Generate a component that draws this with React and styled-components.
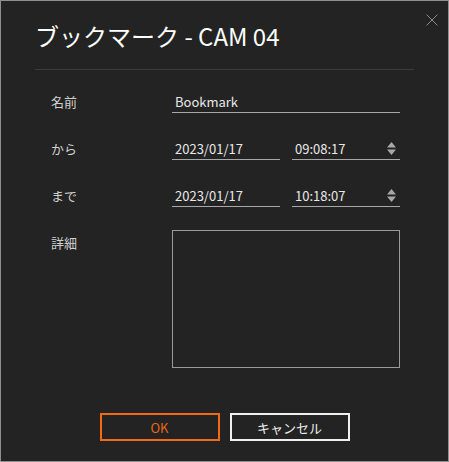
import React from "react"
import styled, { createGlobalStyle } from "styled-components"

const GlobalStyle = createGlobalStyle`
  html, body {
    margin: 0;
    padding: 0;
    background: #232323;
  }
  * {
    box-sizing: border-box;
  }
`

const App = () => {
  return (
    <>
      <GlobalStyle />
      <Dialog>
        <CloseButton aria-label="close">
          <svg width="12" height="12" viewBox="0 0 12 12">
            <path d="M0.5 0.5 L11.5 11.5 M11.5 0.5 L0.5 11.5" stroke="#8a8a8a" strokeWidth="1" />
          </svg>
        </CloseButton>
        <Header>
          <Title>ブックマーク - CAM 04</Title>
        </Header>
        <Form>
          <Label>名前</Label>
          <Field>Bookmark</Field>

          <Label>から</Label>
          <Pair>
            <Field>2023/01/17</Field>
            <Field>
              09:08:17
              <Spinner />
            </Field>
          </Pair>

          <Label>まで</Label>
          <Pair>
            <Field>2023/01/17</Field>
            <Field>
              10:18:07
              <Spinner />
            </Field>
          </Pair>

          <Label top>詳細</Label>
          <TextArea />
        </Form>
        <Actions>
          <Button primary>OK</Button>
          <Button>キャンセル</Button>
        </Actions>
      </Dialog>
    </>
  )
}

const Spinner = () => (
  <SpinIcon width="9" height="13" viewBox="0 0 9 13">
    <path d="M4.5 0 L9 5.5 L0 5.5 Z" fill="#a8a8a8" />
    <path d="M0 7.5 L9 7.5 L4.5 13 Z" fill="#a8a8a8" />
  </SpinIcon>
)

export default App

const Dialog = styled.div`
  position: relative;
  width: 449px;
  height: 462px;
  background: #232323;
  border: 1px solid #8f8f8f;
  display: flex;
  flex-direction: column;
  font-family: "Noto Sans CJK JP", "Noto Sans", sans-serif;
  color: #e6e6e6;
`

const CloseButton = styled.button`
  position: absolute;
  top: 13px;
  right: 10px;
  width: 12px;
  height: 12px;
  padding: 0;
  border: none;
  background: transparent;
  display: flex;
  cursor: pointer;
`

const Header = styled.div`
  margin: 0 34px;
  padding: 18px 0 16px 0;
  border-bottom: 1px solid #3c3c3c;
`

const Title = styled.h1`
  margin: 0;
  font-size: 24px;
  line-height: 34px;
  font-weight: 400;
  color: #ffffff;
`

const Form = styled.div`
  display: grid;
  grid-template-columns: 121px 1fr;
  row-gap: 23px;
  align-items: center;
  padding: 19px 48px 0 50px;
`

const Label = styled.div`
  height: 24px;
  font-size: 13px;
  line-height: 20px;
  padding-top: 3px;
  color: #d0d0d0;
  align-self: ${(p) => (p.top ? "start" : "center")};
`

const Pair = styled.div`
  display: grid;
  grid-template-columns: 1fr 1fr;
  column-gap: 12px;
`

const Field = styled.div`
  position: relative;
  display: flex;
  align-items: center;
  height: 24px;
  padding: 3px 4px 0 3px;
  font-size: 13px;
  line-height: 20px;
  color: #e8e8e8;
  border-bottom: 1px solid #a8a8a8;
`

const SpinIcon = styled.svg`
  margin-left: auto;
  margin-top: -2px;
`

const TextArea = styled.div`
  height: 138px;
  border: 1px solid #9a9a9a;
`

const Actions = styled.div`
  display: flex;
  justify-content: center;
  gap: 10px;
  margin-top: 45px;
`

const Button = styled.button`
  width: 120px;
  height: 28px;
  padding: 0;
  background: transparent;
  font-family: "Noto Sans CJK JP", "Noto Sans", sans-serif;
  font-size: 13px;
  border: 2px solid ${(p) => (p.primary ? "#f26a12" : "#f0f0f0")};
  color: ${(p) => (p.primary ? "#e8661a" : "#ececec")};
  cursor: pointer;
`
